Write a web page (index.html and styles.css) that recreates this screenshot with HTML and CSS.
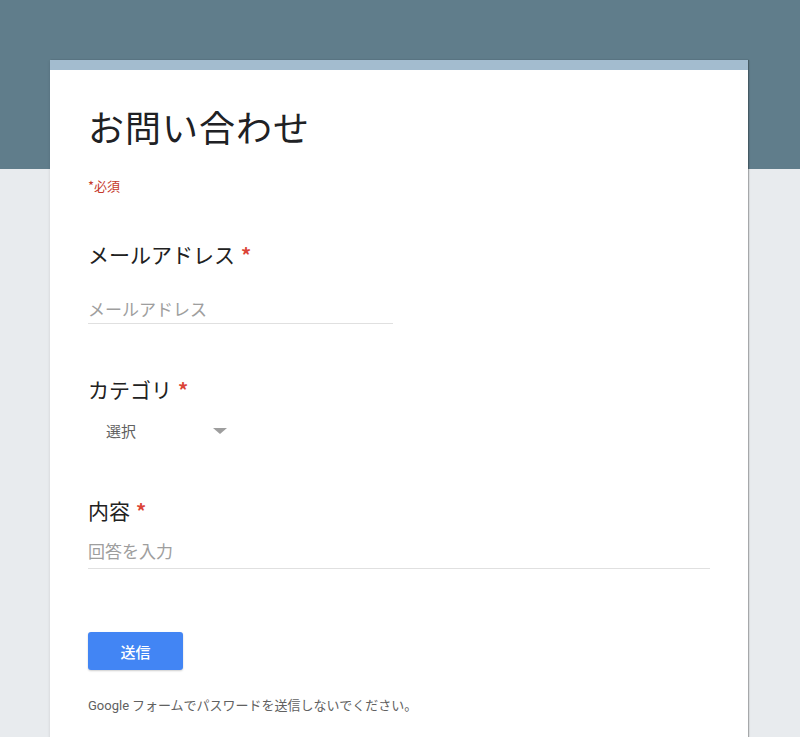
FILE: index.html
```html
<!DOCTYPE html>
<html lang="ja">
<head>
<meta charset="utf-8">
<title>お問い合わせ</title>
<link rel="stylesheet" href="styles.css">
</head>
<body>
<div class="page">
  <main class="card">
    <div class="card-strip"></div>
    <div class="card-body">
      <h1 class="title">お問い合わせ</h1>
      <p class="required-note">*必須</p>

      <section class="question">
        <h2 class="q-label">メールアドレス<span class="star">*</span></h2>
        <div class="text-input short">メールアドレス</div>
      </section>

      <section class="question q-category">
        <h2 class="q-label">カテゴリ<span class="star">*</span></h2>
        <div class="select">
          <span class="select-text">選択</span>
          <span class="select-arrow"></span>
        </div>
      </section>

      <section class="question q-content">
        <h2 class="q-label">内容<span class="star">*</span></h2>
        <div class="text-input long">回答を入力</div>
      </section>

      <button class="submit" type="button">送信</button>

      <p class="footer-note"><span class="latin">Google</span> フォームでパスワードを送信しないでください。</p>
    </div>
  </main>
</div>
</body>
</html>
```

FILE: styles.css
```css
html, body {
  margin: 0;
  padding: 0;
}

body {
  background: linear-gradient(to bottom, #607d8b 0, #607d8b 169px, #e8ebee 169px, #e8ebee 100%);
  min-height: 737px;
  font-family: "Noto Sans CJK JP", "Noto Sans", sans-serif;
  color: #212121;
}

.page {
  padding-top: 60px;
  padding-left: 50px;
  width: 698px;
}

.card {
  background: #fff;
  box-shadow: 1px 0 1px rgba(0, 0, 0, 0.25), 0 1px 3px rgba(0, 0, 0, 0.12);
  min-height: 700px;
}

.card-strip {
  height: 10px;
  background: #a3bccf;
}

.card-body {
  padding: 32px 38px 40px 38px;
}

.title {
  margin: 0;
  font-size: 36px;
  line-height: 48px;
  font-weight: 400;
  letter-spacing: 1px;
  color: #202124;
}

.required-note {
  margin: 26px 0 0 0;
  font-size: 13px;
  line-height: 20px;
  color: #c5392b;
}

.question {
  margin-top: 44px;
}

.q-category {
  margin-top: 51px;
}

.q-content {
  margin-top: 53px;
}

.q-label {
  margin: 0;
  font-size: 21px;
  line-height: 28px;
  font-weight: 400;
  color: #212121;
}

.star {
  color: #db4437;
  margin-left: 6px;
  font-size: 20px;
  font-weight: 700;
}

.text-input {
  margin-top: 28px;
  padding-bottom: 2px;
  font-size: 17px;
  line-height: 24px;
  color: #9e9e9e;
  border-bottom: 1px solid #e0e0e0;
}

.text-input.short {
  width: 305px;
}

.q-content .text-input {
  margin-top: 14px;
  padding-bottom: 5px;
}

.text-input.long {
  width: 622px;
}

.select {
  margin-top: 15px;
  display: flex;
  align-items: center;
  padding-left: 18px;
  height: 24px;
}

.select-text {
  font-size: 15px;
  line-height: 24px;
  color: #616161;
}

.select-arrow {
  margin-left: 77px;
  width: 0;
  height: 0;
  border-left: 7px solid transparent;
  border-right: 7px solid transparent;
  border-top: 6px solid #9e9e9e;
}

.submit {
  display: block;
  margin-top: 63px;
  width: 95px;
  height: 38px;
  border: 0;
  border-radius: 3px;
  background: #4285f4;
  color: #fff;
  font-family: "Noto Sans CJK JP", sans-serif;
  font-size: 15px;
  font-weight: 500;
  box-shadow: 0 1px 2px rgba(0, 0, 0, 0.2);
  padding: 0;
}

.footer-note {
  margin: 26px 0 0 0;
  font-size: 13px;
  line-height: 18px;
  color: #616161;
}

.latin {
  font-family: Roboto, "Noto Sans", sans-serif;
  font-size: 13px;
}
```
